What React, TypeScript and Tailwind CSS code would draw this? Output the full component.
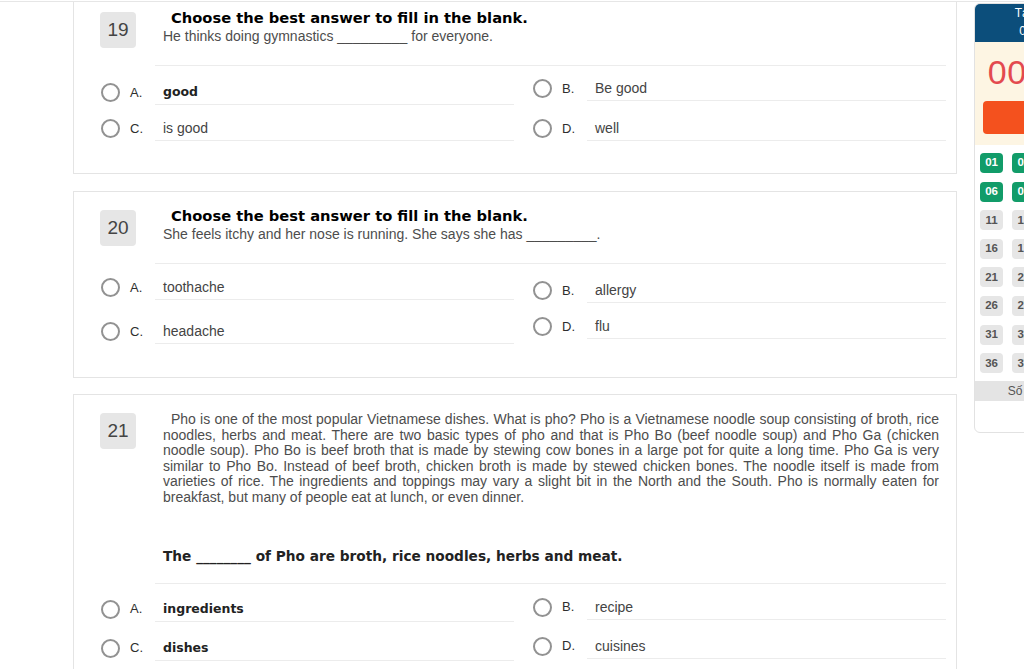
import React from "react";

interface Option {
  key: string;
  text: string;
  bold?: boolean;
  gap: string; // top spacing before this option
}

interface Question {
  num: number;
  title?: string;
  prompt?: React.ReactNode;
  passage?: string[];
  ask?: string;
  left: Option[];
  right: Option[];
  headGap: string;
  cardGap: string;
  padBottom: string;
}

const questions: Question[] = [
  {
    num: 19,
    title: "Choose the best answer to fill in the blank.",
    prompt: "He thinks doing gymnastics _________ for everyone.",
    left: [
      { key: "A.", text: "good", bold: true, gap: "mt-[14px]" },
      { key: "C.", text: "is good", gap: "mt-[11px]" },
    ],
    right: [
      { key: "B.", text: "Be good", gap: "mt-[10px]" },
      { key: "D.", text: "well", gap: "mt-[15px]" },
    ],
    headGap: "mt-[17px]",
    cardGap: "-mt-[9px]",
    padBottom: "pb-[32px]",
  },
  {
    num: 20,
    title: "Choose the best answer to fill in the blank.",
    prompt: "She feels itchy and her nose is running. She says she has _________.",
    left: [
      { key: "A.", text: "toothache", gap: "mt-[11px]" },
      { key: "C.", text: "headache", gap: "mt-[19px]" },
    ],
    right: [
      { key: "B.", text: "allergy", gap: "mt-[14px]" },
      { key: "D.", text: "flu", gap: "mt-[11px]" },
    ],
    headGap: "mt-[17px]",
    cardGap: "mt-[17px]",
    padBottom: "pb-[33px]",
  },
  {
    num: 21,
    passage: [
      "Pho is one of the most popular Vietnamese dishes. What is pho? Pho is a Vietnamese noodle soup consisting of broth, rice",
      "noodles, herbs and meat. There are two basic types of pho and that is Pho Bo (beef noodle soup) and Pho Ga (chicken",
      "noodle soup). Pho Bo is beef broth that is made by stewing cow bones in a large pot for quite a long time. Pho Ga is very",
      "similar to Pho Bo. Instead of beef broth, chicken broth is made by stewed chicken bones. The noodle itself is made from",
      "varieties of rice. The ingredients and toppings may vary a slight bit in the North and the South. Pho is normally eaten for",
      "breakfast, but many of people eat at lunch, or even dinner.",
    ],
    ask: "The ________ of Pho are broth, rice noodles, herbs and meat.",
    left: [
      { key: "A.", text: "ingredients", bold: true, gap: "mt-[13px]" },
      { key: "C.", text: "dishes", bold: true, gap: "mt-[14px]" },
    ],
    right: [
      { key: "B.", text: "recipe", gap: "mt-[11px]" },
      { key: "D.", text: "cuisines", gap: "mt-[14px]" },
    ],
    headGap: "mt-[18px]",
    cardGap: "mt-[16px]",
    padBottom: "pb-[40px]",
  },
];

const sans = "font-['Liberation_Sans',Arial,sans-serif]";
const heavy = "font-['DejaVu_Sans',Verdana,sans-serif] font-bold";

const OptionRow: React.FC<{ opt: Option }> = ({ opt }) => (
  <div className={`flex items-center ${opt.gap}`}>
    <span className="w-[19px] h-[19px] -ml-[1px] rounded-full border-2 border-[#929292] bg-white shrink-0" />
    <span className={`${sans} w-[25px] ml-[10px] text-[13px] text-[#2e2e2e]`}>{opt.key}</span>
    <div
      className={`flex-1 border-b border-[#ececec] pl-[8px] py-[4px] leading-[16px] ${
        opt.bold ? `${heavy} text-[12.5px] text-[#222]` : `${sans} text-[14px] text-[#444]`
      }`}
    >
      {opt.text}
    </div>
  </div>
);

const QuestionCard: React.FC<{ q: Question }> = ({ q }) => (
  <div className={`border border-[#e4e4e4] bg-white pt-[18px] ${q.padBottom} ${q.cardGap}`}>
    <div className="flex">
      <div
        className={`${sans} ml-[26px] w-[36px] h-[36px] shrink-0 bg-[#e6e6e6] rounded-sm flex items-center justify-center text-[19px] text-[#444]`}
      >
        {q.num}
      </div>
      {q.passage ? (
        <div className="ml-[27px] mr-[17px] -mt-[1px] flex-1">
          <div className={`${sans} text-[14px] leading-[15.6px] text-[#4d4d4d]`}>
            {q.passage.map((line, i) => (
              <div
                key={i}
                className={
                  i < q.passage!.length - 1
                    ? `text-justify [text-align-last:justify] ${i === 0 ? "pl-[8px]" : ""}`
                    : ""
                }
              >
                {line}
              </div>
            ))}
          </div>
          <div className={`${heavy} mt-[41px] text-[13.7px] leading-[18px] text-[#222]`}>{q.ask}</div>
        </div>
      ) : (
        <div className="ml-[27px] -mt-[3px] flex-1">
          <div className={`${heavy} pl-[8px] text-[14.7px] leading-[18px] text-black`}>{q.title}</div>
          <div className={`${sans} text-[14px] leading-[18px] text-[#4d4d4d]`}>{q.prompt}</div>
        </div>
      )}
    </div>
    <div className={`${q.headGap} ml-[81px] mr-[10px] h-px bg-[#ececec]`} />
    <div className="flex gap-x-[20px] pl-[28px] pr-[10px]">
      <div className="flex-1 flex flex-col">
        {q.left.map((o) => (
          <OptionRow key={o.key} opt={o} />
        ))}
      </div>
      <div className="flex-1 flex flex-col">
        {q.right.map((o) => (
          <OptionRow key={o.key} opt={o} />
        ))}
      </div>
    </div>
  </div>
);

const SidePanel: React.FC = () => {
  const nums = Array.from({ length: 40 }, (_, i) => i + 1);
  return (
    <div className="ml-[17px] mt-[1px] w-[164px] shrink-0 self-start border border-[#e2e2e2] rounded-md overflow-hidden bg-white">
      <div className={`${sans} bg-[#0c4e7b] h-[38px] text-white text-[12px] leading-[18px] text-center`}>
        <div>Tạ Quang Minh</div>
        <div>0912 345 678</div>
      </div>
      <div className="bg-[#fdf5e3] pt-[12px] pb-[11px] px-[8px]">
        <div className={`${sans} text-center text-[34px] leading-[36px] tracking-[0.5px] text-[#e34a4f]`}>00:45:00</div>
        <div className={`${sans} mt-[11px] h-[33px] rounded bg-[#f4511e] text-white text-[14px] font-bold flex items-center justify-center`}>
          Nộp bài
        </div>
      </div>
      <div className="grid grid-cols-5 gap-x-[9px] gap-y-[8.6px] px-[5px] pt-[8px]">
        {nums.map((n) => (
          <div
            key={n}
            className={`${sans} h-[20px] flex items-center justify-center text-[11.5px] font-bold rounded-sm ${
              n <= 10 ? "bg-[#129c69] text-white" : "bg-[#e6e6e6] text-[#555]"
            }`}
          >
            {String(n).padStart(2, "0")}
          </div>
        ))}
      </div>
      <div className={`${sans} mt-[8px] h-[20px] bg-[#e4e4e4] text-[12px] text-[#555] flex items-center justify-center`}>
        Số câu đã làm: 10
      </div>
      <div className="h-[31px]" />
    </div>
  );
};

export default function App() {
  return (
    <div className="w-[1024px] h-[669px] overflow-hidden bg-white flex flex-col">
      <div className="mt-[1px] h-px bg-[#e6e6e6] shrink-0" />
      <div className="flex pl-[73px] overflow-hidden">
        <div className="w-[884px] shrink-0 flex flex-col">
          {questions.map((q) => (
            <QuestionCard key={q.num} q={q} />
          ))}
        </div>
        <SidePanel />
      </div>
    </div>
  );
}
